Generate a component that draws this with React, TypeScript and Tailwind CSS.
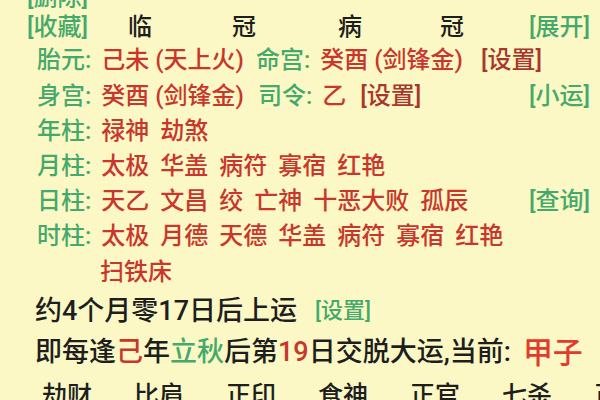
const green = 'text-[#45a96b]';
const red = 'text-[#c9372c]';
const darkRed = 'text-[#a9362c]';
const ink = 'text-[#1e1e1e]';

function Label({ children }: { children: string }) {
    return <span className={`${green} mr-[10px]`}>{children}:</span>;
}

function Words({ items }: { items: string[] }) {
    return (
        <span className={`${red} inline-flex gap-[11px]`}>
            {items.map((w, i) => (
                <span key={i}>{w}</span>
            ))}
        </span>
    );
}

const tenGods = ['劫财', '比肩', '正印', '食神', '正官', '七杀', '正'];

export default function App() {
    return (
        <div
            className="w-[600px] h-[400px] overflow-hidden bg-[#fbf8c6] text-[24px] leading-none font-medium"
            style={{ fontFamily: 'Roboto, "Noto Sans CJK SC", sans-serif' }}
        >
            <div className="-mt-[17px] pl-[27px] pr-[10px]">
                {/* 顶部按钮 */}
                <div className="h-[28px] flex items-center">
                    <span className={green}>[删除]</span>
                </div>
                <div className="h-[31px] flex items-center">
                    <span className={`${green} w-[101px]`}>[收藏]</span>
                    <span className={`${ink} w-[104px]`}>临</span>
                    <span className={`${ink} w-[106px]`}>冠</span>
                    <span className={`${ink} w-[102px]`}>病</span>
                    <span className={ink}>冠</span>
                    <span className={`${green} ml-auto`}>[展开]</span>
                </div>

                {/* 命盘信息 */}
                <div className="pl-[10px]">
                    <div className="h-[36px] flex items-center">
                        <Label>胎元</Label>
                        <span className={`${red} mr-[12px]`}>己未 (天上火)</span>
                        <Label>命宫</Label>
                        <span className={`${red} mr-[18px]`}>癸酉 (剑锋金)</span>
                        <span className={darkRed}>[设置]</span>
                    </div>
                    <div className="h-[36px] flex items-center">
                        <Label>身宫</Label>
                        <span className={`${red} mr-[14px]`}>癸酉 (剑锋金)</span>
                        <Label>司令</Label>
                        <span className={`${red} mr-[14px]`}>乙</span>
                        <span className={darkRed}>[设置]</span>
                        <span className={`${green} ml-auto`}>[小运]</span>
                    </div>
                    <div className="h-[34px] flex items-center">
                        <Label>年柱</Label>
                        <Words items={['禄神', '劫煞']} />
                    </div>
                    <div className="h-[35px] flex items-center">
                        <Label>月柱</Label>
                        <Words items={['太极', '华盖', '病符', '寡宿', '红艳']} />
                    </div>
                    <div className="h-[36px] flex items-center">
                        <Label>日柱</Label>
                        <Words items={['天乙', '文昌', '绞', '亡神', '十恶大败', '孤辰']} />
                        <span className={`${green} ml-auto`}>[查询]</span>
                    </div>
                    <div className="h-[34px] flex items-center">
                        <Label>时柱</Label>
                        <Words items={['太极', '月德', '天德', '华盖', '病符', '寡宿', '红艳']} />
                    </div>
                    <div className="h-[37px] flex items-center pl-[63px]">
                        <Words items={['扫铁床']} />
                    </div>
                </div>

                {/* 大运 */}
                <div className="pl-[8px] text-[27px]">
                    <div className="h-[42px] flex items-center">
                        <span className={ink}>约4个月零17日后上运</span>
                        <span className={`${green} text-[22px] ml-[18px]`}>[设置]</span>
                    </div>
                    <div className="h-[41px] flex items-center whitespace-nowrap">
                        <span className={ink}>即每逢</span>
                        <span className={red}>己</span>
                        <span className={ink}>年</span>
                        <span className={green}>立秋</span>
                        <span className={ink}>后第</span>
                        <span className={red}>19</span>
                        <span className={ink}>日交脱大运,当前:</span>
                        <span className="text-[#e23a2c] text-[30px] ml-[12px]">甲子</span>
                    </div>
                </div>

                <div className="h-[44px] flex items-center pl-[15px] whitespace-nowrap text-[25px]">
                    {tenGods.map((g, i) => (
                        <span key={i} className={`${ink} w-[92px] shrink-0`}>{g}</span>
                    ))}
                </div>
            </div>
        </div>
    );
}
